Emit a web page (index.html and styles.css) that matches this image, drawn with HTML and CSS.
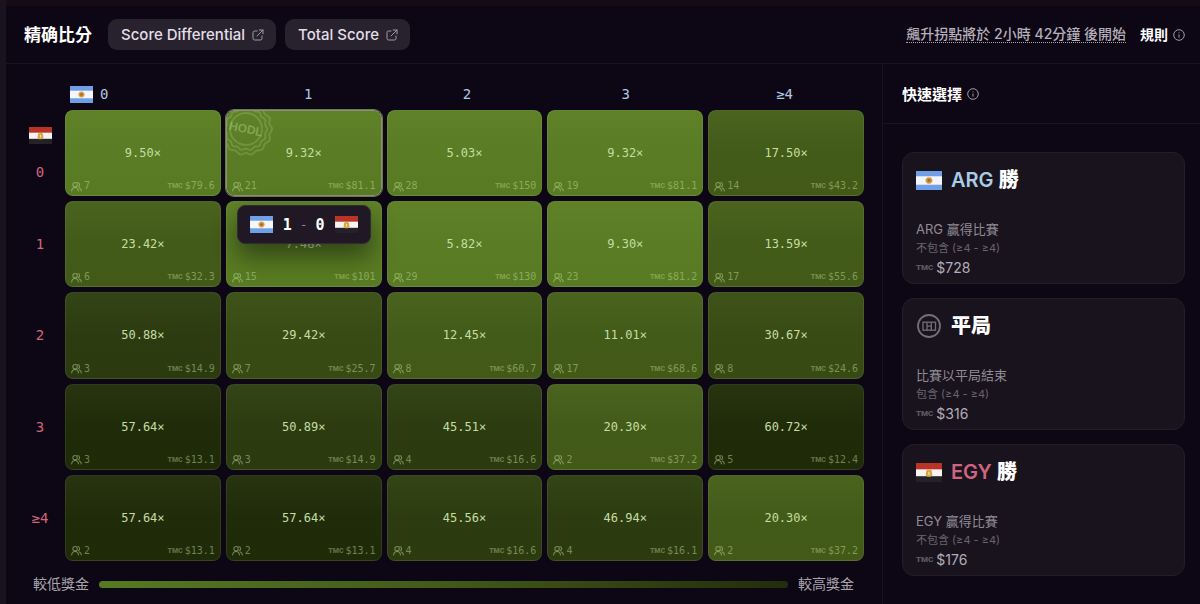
FILE: index.html
```
<!DOCTYPE html>
<html lang="zh-Hant">
<head>
  <meta charset="UTF-8">
  <meta name="viewport" content="width=device-width, initial-scale=1">
  <title>ARG vs EGY – 精确比分</title>
  <link rel="stylesheet" href="styles.css">
</head>
<body>
  <svg class="sprite" aria-hidden="true">
    <symbol id="flag-arg" viewBox="0 0 24 18" preserveAspectRatio="none">
      <rect width="24" height="18" fill="#6f9fe6"/>
      <rect y="5" width="24" height="8" fill="#f4f6fb"/>
      <circle cx="12" cy="9" r="3" fill="#d9963a" stroke="#e3b777" stroke-width=".8" stroke-dasharray="1 .6"/>
      <circle cx="12" cy="9" r="1.4" fill="#a8692c"/>
    </symbol>
    <symbol id="flag-egy" viewBox="0 0 24 18" preserveAspectRatio="none">
      <rect width="24" height="18" fill="#242226"/>
      <rect width="24" height="12.5" fill="#f6f3f2"/>
      <rect width="24" height="6" fill="#b93427"/>
      <path d="M9.500 7.200l1.500-.9h2l1.500.9.6 4.300-1.500 1.500h-3.200l-1.500-1.500z" fill="#d6a640"/>
      <path d="M11.400 8.300h1.200v3h-1.200z" fill="#f0dfae"/>
    </symbol>
    <symbol id="icon-open" viewBox="0 0 12 12">
      <path d="M5 2H2.600A1.600 1.600 0 0 0 1 3.600V9.400A1.600 1.600 0 0 0 2.600 11H8.400A1.600 1.600 0 0 0 10 9.400V7M7.200 1H11V4.800M11 1L5 7" fill="none" stroke="currentColor" stroke-linecap="round" stroke-linejoin="round"/>
    </symbol>
    <symbol id="icon-info" viewBox="0 0 12 12">
      <circle cx="6" cy="6" r="5.300" fill="none" stroke="currentColor"/>
      <path d="M6 5.500V8.600M6 3.400V4.300" stroke="currentColor"/>
    </symbol>
    <symbol id="icon-users" viewBox="0 0 10 10">
      <g fill="none" stroke="currentColor" stroke-linecap="round">
        <circle cx="3.700" cy="3.300" r="2"/>
        <path d="M.6 9C.8 7 2 5.900 3.700 5.900S6.600 7 6.800 9M6.200 1.400A2 2 0 0 1 6.600 5.200M7.600 6.300C8.600 6.700 9.300 7.700 9.400 9"/>
      </g>
    </symbol>
    <symbol id="icon-draw" viewBox="0 0 26 26">
      <g fill="none" stroke="currentColor">
        <circle cx="13" cy="13" r="11" stroke-width="1.800"/>
        <rect x="7" y="9.200" width="12.500" height="8" stroke-width="1.300"/>
        <path d="M11 9.200V17.200M15.300 9.200V17.200M11 13.200H15.300" stroke-width="1.300"/>
      </g>
    </symbol>
  </svg>

  <main class="panel">
    <header class="topbar">
      <h1>精确比分</h1>
      <button class="tab" type="button">Score Differential <svg class="icon"><use href="#icon-open"/></svg></button>
      <button class="tab" type="button">Total Score <svg class="icon"><use href="#icon-open"/></svg></button>
      <span class="countdown">飆升拐點將於 2小時 42分鐘 後開始</span>
      <a class="rules" href="#">規則 <svg class="icon"><use href="#icon-info"/></svg></a>
    </header>

    <div class="content">
      <section class="board">
        <div class="col-labels">
          <span class="first"><svg class="flag"><use href="#flag-arg"/></svg>0</span>
          <span>1</span>
          <span>2</span>
          <span>3</span>
          <span>≥4</span>
        </div>
        <div class="grid" id="grid"></div>
        <div class="legend">
          <span>較低獎金</span>
          <div class="legend-bar"></div>
          <span>較高獎金</span>
        </div>
      </section>

      <aside class="quick">
        <h2>快速選擇 <svg class="icon"><use href="#icon-info"/></svg></h2>
        <div class="cards">
          <button class="card" type="button">
            <span class="card-title"><svg class="flag"><use href="#flag-arg"/></svg><span><span class="arg">ARG</span> <b>勝</b></span></span>
            <span class="desc">ARG 贏得比賽</span>
            <span class="note">不包含 (≥4 - ≥4)</span>
            <span class="pool"><span class="tmc">TMC</span>$728</span>
          </button>
          <button class="card" type="button">
            <span class="card-title"><svg class="draw"><use href="#icon-draw"/></svg><b>平局</b></span>
            <span class="desc">比賽以平局結束</span>
            <span class="note">包含 (≥4 - ≥4)</span>
            <span class="pool"><span class="tmc">TMC</span>$316</span>
          </button>
          <button class="card" type="button">
            <span class="card-title"><svg class="flag"><use href="#flag-egy"/></svg><span><span class="egy">EGY</span> <b>勝</b></span></span>
            <span class="desc">EGY 贏得比賽</span>
            <span class="note">不包含 (≥4 - ≥4)</span>
            <span class="pool"><span class="tmc">TMC</span>$176</span>
          </button>
        </div>
      </aside>
    </div>
  </main>

  <script>
    // [multiplier, holders, pool] per score, rows = EGY goals, columns = ARG goals
    const rows = [
      ['0', [['9.50', 7, '79.6'], ['9.32', 21, '81.1'], ['5.03', 28, '150'], ['9.32', 19, '81.1'], ['17.50', 14, '43.2']]],
      ['1', [['23.42', 6, '32.3'], ['7.48', 15, '101'], ['5.82', 29, '130'], ['9.30', 23, '81.2'], ['13.59', 17, '55.6']]],
      ['2', [['50.88', 3, '14.9'], ['29.42', 7, '25.7'], ['12.45', 8, '60.7'], ['11.01', 17, '68.6'], ['30.67', 8, '24.6']]],
      ['3', [['57.64', 3, '13.1'], ['50.89', 3, '14.9'], ['45.51', 4, '16.6'], ['20.30', 2, '37.2'], ['60.72', 5, '12.4']]],
      ['≥4', [['57.64', 2, '13.1'], ['57.64', 2, '13.1'], ['45.56', 4, '16.6'], ['46.94', 4, '16.1'], ['20.30', 2, '37.2']]]
    ];

    function level(x) {
      if (x < 10) return 1;
      if (x < 25) return 2;
      if (x < 40) return 3;
      if (x < 55) return 4;
      return 5;
    }

    // wavy outline of the stamp
    function scallop(r, depth, bumps) {
      const pts = [];
      for (let i = 0; i <= 180; i++) {
        const a = i / 180 * Math.PI * 2;
        const d = r + depth * Math.cos(a * bumps);
        pts.push((d * Math.cos(a)).toFixed(1) + ' ' + (d * Math.sin(a)).toFixed(1));
      }
      return 'M' + pts.join('L') + 'Z';
    }

    const stamp = `<span class="stamp"><svg viewBox="-28 -28 56 56">
      <path d="${scallop(25, 1, 14)}"/><path d="${scallop(20.5, .8, 14)}"/><circle r="16"/>
      <text transform="rotate(12)" y="4" text-anchor="middle">HODL</text></svg></span>`;

    const tooltip = `<span class="tooltip"><svg class="flag"><use href="#flag-arg"/></svg>
      <b>1</b><i>-</i><b>0</b><svg class="flag"><use href="#flag-egy"/></svg></span>`;

    let html = '';
    rows.forEach(([label, cells], r) => {
      const flag = r === 0 ? '<svg class="flag"><use href="#flag-egy"/></svg>' : '';
      html += `<div class="row-label">${flag}<span>${label}</span></div>`;
      cells.forEach(([mult, users, pool], c) => {
        const active = r === 0 && c === 1;
        html += `<button type="button" class="cell level-${level(mult)}${active ? ' active' : ''}">
          ${active ? stamp : ''}
          <span class="mult">${mult}×</span>
          <span class="meta">
            <svg class="users"><use href="#icon-users"/></svg><span>${users}</span>
            <span class="tmc">TMC</span><span>$${pool}</span>
          </span>
          ${active ? tooltip : ''}
        </button>`;
      });
    });
    document.getElementById('grid').innerHTML = html;
  </script>
</body>
</html>
```
FILE: styles.css
```
* {
  box-sizing: border-box;
}
body {
  margin: 0;
  background: #0d0614;
  color: #fff;
  font-family: Inter, "Noto Sans CJK TC", sans-serif;
}
h1, h2 {
  margin: 0;
}
button {
  font: inherit;
  color: inherit;
  cursor: pointer;
}
.sprite {
  position: absolute;
  width: 0;
  height: 0;
}
.panel {
  display: flex;
  flex-direction: column;
  min-height: 100vh;
  border-left: 6px solid #19131f;
}

/* top bar */
.topbar {
  display: flex;
  align-items: center;
  height: 64px;
  padding: 0 15px 0 18px;
  border-top: 6px solid #170a17;
  border-bottom: 1px solid #19121f;
}
.topbar h1 {
  margin-right: 16px;
  font-family: Inter, "Noto Sans CJK SC", sans-serif;
  font-size: 17px;
  line-height: 24px;
}
.tab {
  display: flex;
  align-items: center;
  gap: 7px;
  height: 31px;
  margin-right: 9px;
  padding: 0 12px 0 13px;
  border: none;
  border-radius: 9px;
  background: #28222f;
  color: #e2dfe6;
  font-size: 15px;
  font-weight: 500;
}
.icon {
  width: 12px;
  height: 12px;
  color: #a19ca6;
}
.countdown {
  margin-left: auto;
  border-bottom: 1px dotted #aaa5af;
  color: #b5b0ba;
  font-size: 14px;
  font-weight: 500;
  line-height: 16px;
}
.rules {
  display: flex;
  align-items: center;
  gap: 5px;
  margin-left: 14px;
  color: #fff;
  font-size: 14px;
  font-weight: bold;
  line-height: 16px;
  text-decoration: none;
}

.content {
  display: flex;
  flex: 1;
}

/* score grid */
.board {
  display: flex;
  flex: 1;
  flex-direction: column;
  padding: 20px 18px 10px 14px;
}
.flag {
  flex: none;
  width: 23px;
  height: 17px;
}
.col-labels {
  display: grid;
  grid-template-columns: repeat(5, 1fr);
  align-items: center;
  height: 20px;
  margin-bottom: 6px;
  padding-left: 50px;
  color: #b3c6e2;
  font-family: "DejaVu Sans Mono", monospace;
  font-size: 14px;
  text-align: center;
}
.col-labels .first {
  display: flex;
  align-items: center;
  gap: 7px;
}
.grid {
  display: grid;
  flex: 1;
  grid-template-columns: 40px repeat(5, 1fr);
  grid-auto-rows: 1fr;
  gap: 5px;
  font-family: "DejaVu Sans Mono", monospace;
}
.row-label {
  display: flex;
  flex-direction: column;
  align-items: center;
  justify-content: center;
  gap: 20px;
  color: #d0657b;
  font-size: 14px;
}
.cell {
  position: relative;
  display: flex;
  align-items: center;
  justify-content: center;
  min-height: 80px;
  padding: 0;
  border: 1px solid rgba(255, 255, 255, 0.08);
  border-radius: 8px;
}
.level-1 {
  background: linear-gradient(#5f8229, #597c24 50%, #587a22);
}
.level-2 {
  background: linear-gradient(#4a631f, #435b18 50%, #425917);
}
.level-3 {
  background: linear-gradient(#3e531a, #384b14 50%, #374a13);
}
.level-4 {
  background: linear-gradient(#334416, #2c3c10 50%, #2b3b0f);
}
.level-5 {
  background: linear-gradient(#28330f, #202b0a 50%, #1f2a09);
}
.cell.active {
  z-index: 1;
  border-color: #8b9276;
  box-shadow: 0 0 0 1px #6d7a50;
}
.mult {
  color: #c5dda4;
  font-size: 12px;
  line-height: 14px;
}
.meta {
  position: absolute;
  right: 5px;
  bottom: 2px;
  left: 5px;
  display: flex;
  align-items: center;
  gap: 2px;
  color: rgba(190, 220, 150, 0.5);
  font-size: 10px;
  line-height: 14px;
}
.users {
  width: 11px;
  height: 11px;
}
.tmc {
  font-family: Roboto, sans-serif;
  font-size: 7px;
  font-weight: 900;
}
.meta .tmc {
  margin-left: auto;
  opacity: 0.8;
}
.stamp {
  position: absolute;
  inset: 0;
  overflow: hidden;
  border-radius: 8px;
}
.stamp svg {
  position: absolute;
  top: -10px;
  left: -9px;
  width: 56px;
  height: 56px;
  fill: none;
  stroke: rgba(160, 200, 110, 0.3);
  stroke-width: 2;
}
.stamp text {
  fill: rgba(165, 205, 115, 0.5);
  stroke: none;
  font-family: "Liberation Sans", sans-serif;
  font-size: 12px;
  font-weight: bold;
}
.tooltip {
  position: absolute;
  top: calc(100% + 10px);
  left: 50%;
  display: flex;
  align-items: center;
  gap: 10px;
  height: 39px;
  padding: 0 12px;
  transform: translateX(-50%);
  border: 1px solid #332a38;
  border-radius: 8px;
  background: #211825;
  box-shadow: 0 12px 24px rgba(0, 0, 0, 0.45);
  font-size: 15px;
}
.tooltip i {
  margin: 0 -2px;
  color: #8e8892;
  font-size: 13px;
  font-style: normal;
}
.legend {
  display: flex;
  align-items: center;
  gap: 10px;
  margin-top: 13px;
  padding: 0 10px 0 13px;
  color: #a9a4ae;
  font-size: 14px;
  line-height: 20px;
}
.legend-bar {
  flex: 1;
  height: 7px;
  border-radius: 4px;
  background: linear-gradient(90deg, #567a22, #425a18 50%, #222d0b);
}

/* quick picks */
.quick {
  width: 318px;
  border-left: 1px solid #19121f;
}
.quick h2 {
  display: flex;
  align-items: center;
  gap: 5px;
  height: 60px;
  padding-left: 19px;
  border-bottom: 1px solid #19121f;
  font-size: 15px;
}
.cards {
  display: flex;
  flex-direction: column;
  gap: 14px;
  padding: 28px 15px 28px 19px;
}
.card {
  display: flex;
  flex-direction: column;
  height: 132px;
  padding: 13px 13px 0;
  border: 1px solid #251e2a;
  border-radius: 12px;
  background: #19131d;
  text-align: left;
  line-height: 19px;
}
.card-title {
  display: flex;
  align-items: center;
  gap: 9px;
  margin-bottom: 26px;
  font-size: 20px;
  font-weight: 600;
  line-height: 28px;
}
.card .flag {
  width: 26px;
  height: 19px;
}
.draw {
  width: 26px;
  height: 26px;
  color: #746e79;
}
.arg {
  color: #a9cbe4;
}
.egy {
  color: #cf6580;
}
.desc {
  color: #918b96;
  font-size: 13px;
}
.note {
  color: #6a646f;
  font-size: 11px;
}
.pool {
  display: flex;
  align-items: center;
  gap: 3px;
  color: #b2adb7;
  font-size: 14px;
}
.pool .tmc {
  color: #5f5964;
  font-size: 8px;
}
```
